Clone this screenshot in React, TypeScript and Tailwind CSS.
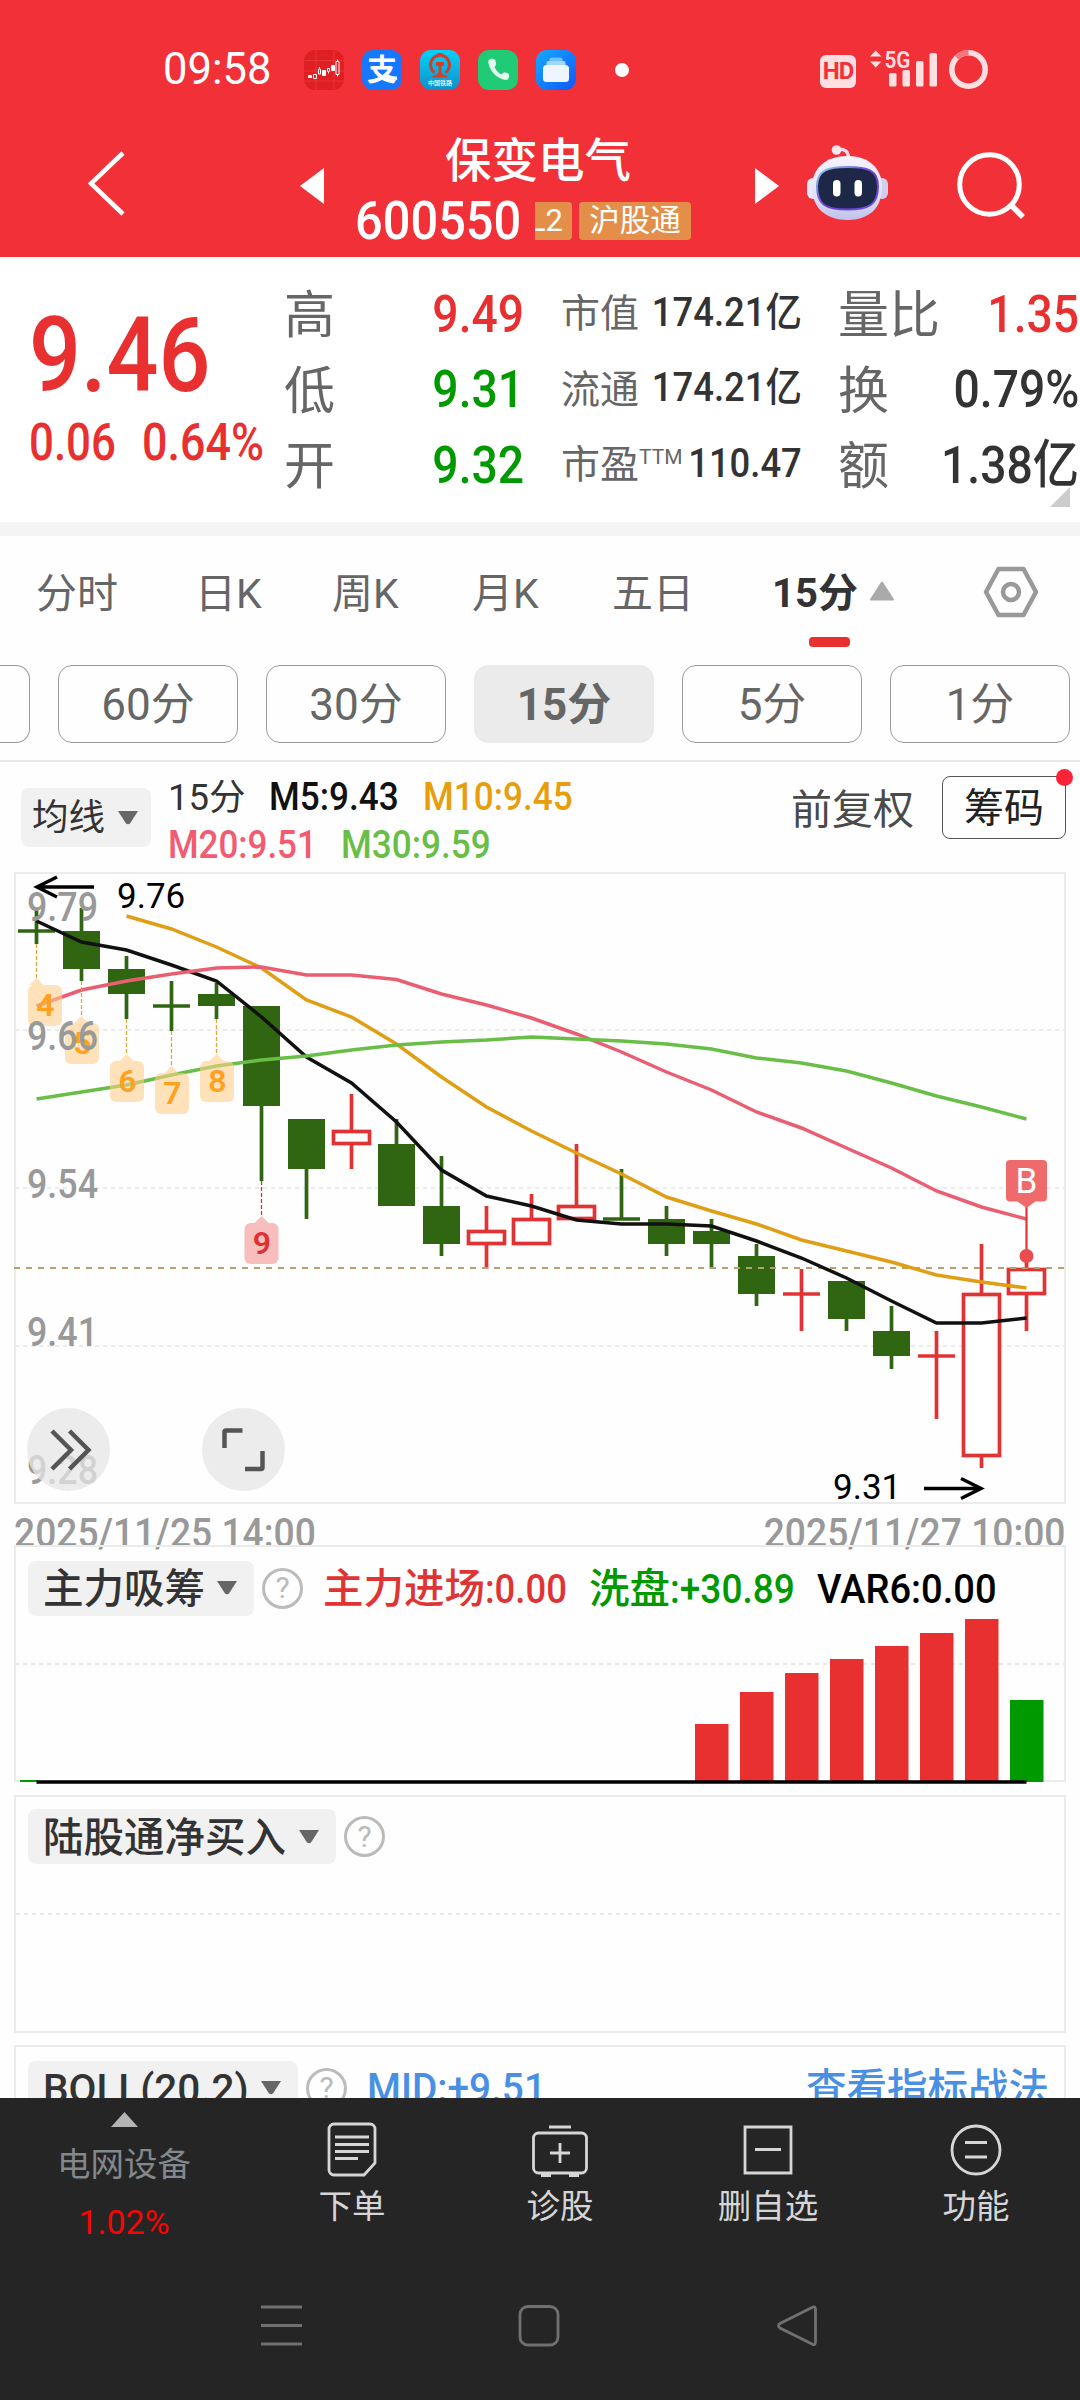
import type { ReactNode } from 'react';
import clsx from 'clsx';

const FONT = "font-['Roboto','Noto_Sans_CJK_SC',sans-serif]";

const STEP = 45;
const xAt = (i: number) => 36.5 + STEP * i;

// [up, high, bodyTop, bodyBottom, low] in chart units
type Candle = [boolean, number, number, number, number];

const candles: Candle[] = [
    [false, 910, 931, 931, 944],
    [false, 908, 931, 969, 981],
    [false, 956, 969, 994, 1019],
    [false, 981, 1006, 1006, 1031],
    [false, 983, 994, 1006, 1019],
    [false, 1006, 1006, 1106, 1181],
    [false, 1119, 1119, 1169, 1219],
    [true, 1094, 1130, 1145, 1169],
    [false, 1119, 1144, 1206, 1206],
    [false, 1156, 1206, 1244, 1256],
    [true, 1206, 1230, 1245, 1269],
    [true, 1194, 1218, 1245, 1245],
    [true, 1144, 1205, 1220, 1220],
    [false, 1169, 1219, 1219, 1219],
    [false, 1206, 1219, 1244, 1256],
    [false, 1219, 1231, 1244, 1269],
    [false, 1244, 1256, 1294, 1306],
    [true, 1269, 1294, 1294, 1331],
    [false, 1281, 1281, 1319, 1331],
    [false, 1306, 1331, 1356, 1369],
    [true, 1331, 1356, 1356, 1419],
    [true, 1244, 1293, 1457, 1468],
    [true, 1256, 1268, 1295, 1331],
];

const averages = [
    { color: '#111111', from: 0, ys: [921, 942, 950, 965, 981, 1017, 1057, 1083, 1122, 1170, 1196, 1206, 1220, 1224, 1224, 1226, 1241, 1258, 1278, 1301, 1323, 1323, 1318] },
    { color: '#e09e14', from: 2, ys: [916, 929, 947, 968, 1000, 1017, 1044, 1077, 1107, 1131, 1153, 1174, 1197, 1211, 1224, 1240, 1251, 1262, 1275, 1282, 1288] },
    { color: '#ea5e72', from: 0, ys: [1006, 990, 981, 974, 968, 967, 975, 975, 979.5, 994, 1005, 1018, 1034, 1052, 1072, 1090, 1112, 1128, 1148, 1168, 1191, 1207, 1219] },
    { color: '#68be46', from: 0, ys: [1099, 1092, 1085, 1075, 1066, 1060, 1056, 1050, 1045, 1042, 1040, 1037, 1039, 1041, 1044, 1049, 1058, 1063, 1071, 1083, 1096, 1107, 1119] },
];

const counts = [
    { n: 4, i: 0, left: 28, low: 944, top: 985 },
    { n: 5, i: 1, left: 65, low: 981, top: 1023 },
    { n: 6, i: 2, left: 110, low: 1019, top: 1061 },
    { n: 7, i: 3, left: 155, low: 1031, top: 1073 },
    { n: 8, i: 4, left: 200, low: 1019, top: 1061 },
    { n: 9, i: 5, left: 244.5, low: 1181, top: 1223 },
];

const priceTicks: [string, number][] = [
    ['9.79', 921],
    ['9.66', 1050],
    ['9.54', 1198],
    ['9.41', 1346],
    ['9.28', 1484],
];

const bars: [number, string][] = [
    [1724, '#e83030'],
    [1692, '#e83030'],
    [1673, '#e83030'],
    [1659, '#e83030'],
    [1646, '#e83030'],
    [1633, '#e83030'],
    [1619, '#e83030'],
    [1700, '#009900'],
];

function StatusBar() {
    return (
        <div className="flex h-[120px] items-center pt-[20px] pl-[163px]">
            <span className="w-[141px] text-[43.500px] leading-[48px] text-white">09:58</span>
            <div className="flex gap-[18px]">
                <svg width="40" height="40" viewBox="0 0 40 40">
                    <rect width="40" height="40" rx="11" fill="#e01f22" />
                    <path d="M0 10.500H40M0 21H40M0 31H40M12 0V40M30 0V40" stroke="#e83a3a" strokeWidth=".8" />
                    <g fill="#fff" stroke="#fff" strokeWidth="1">
                        <path d="M4.500 25.500h3v2h-3zM18.500 20.500h3v5h-3zM27.500 15.500h3v5h-3z" />
                        <path fill="none" d="M9.500 24.500h3v4h-3zM14.500 19h2v5h-2zM23.500 18.500h2v3h-2zM32 11.500h3v13h-3zM15.500 17v2M24.500 21.500v2M33.500 9.500v2M33.500 24.500v2" />
                    </g>
                </svg>
                <div className="relative size-[40px] overflow-hidden rounded-[11px] bg-[#1677ff] text-center text-[30px] leading-[39px] font-bold text-white">
                    支
                    <svg className="absolute inset-0" width="40" height="40" viewBox="0 0 40 40">
                        <path d="M23 25c5 2.500 9 3.500 12 3" fill="none" stroke="#fff" strokeWidth="3.500" />
                    </svg>
                </div>
                <div className="relative size-[40px] rounded-[11px] bg-linear-to-b from-[#00d2fb] to-[#128fc9]">
                    <svg width="40" height="28" viewBox="0 0 40 28">
                        <path d="M14.500 22.500a9.500 9.500 0 1 1 11 0" fill="none" stroke="#c9402b" strokeWidth="3" />
                        <path d="M17.500 3h5v3h-5zM16 12h8v4h-2.500v6c0 2 2 3 6 4v1.500h-15V26c4-1 6-2 6-4v-6H16z" fill="#d93c22" />
                    </svg>
                    <span className="absolute top-[29px] left-[8px] w-[30px] text-[6px] leading-[8px] font-medium text-white">中国铁路</span>
                </div>
                <svg width="40" height="40" viewBox="0 0 40 40">
                    <rect width="40" height="40" rx="11" fill="#1fcb74" />
                    <path d="M12.500 9c-2 .5-2.500 2.300-2 4.500 1.800 8 8 14.500 16 16.300 2.500.5 4.500-.5 4.500-3v-2.500c-3-2.300-5.500-2.300-7.500.2-3-1.500-5.500-4-7-7.500 2-1.800 2-3.500.5-7.500-1-.8-3-.8-4.500-.5z" fill="#e4fbef" />
                </svg>
                <svg width="40" height="40" viewBox="0 0 40 40">
                    <defs>
                        <linearGradient id="cards" x1="0" y1="0" x2="1" y2="1">
                            <stop offset="0" stopColor="#15a9ff" />
                            <stop offset="1" stopColor="#0f57fb" />
                        </linearGradient>
                    </defs>
                    <rect width="40" height="40" rx="11" fill="url(#cards)" />
                    <rect x="13.500" y="7.500" width="13" height="5" rx="2" fill="#6fc0ff" />
                    <rect x="10.500" y="11" width="19" height="6" rx="2" fill="#a5d6ff" />
                    <rect x="7" y="15" width="26" height="17" rx="3.500" fill="#eef5ff" />
                </svg>
            </div>
            <div className="ml-[39px] size-[14px] rounded-full bg-white" />
            <div className="mt-[2px] ml-[191px] flex h-[33px] w-[36px] items-center justify-center rounded-[6px] bg-[#ffdfe1] text-[24px] font-bold tracking-[-1px] text-[#f23038]">
                HD
            </div>
            <svg className="ml-[14px]" width="120" height="44" viewBox="870 47 120 44" fill="#ffdfe1">
                <path d="M870 55.500l5.700-6 5.700 6zM870 60.500l5.700 6 5.700-6z" />
                <text x="884.500" y="66.500" fontSize="23" fontWeight="600" textLength="26" lengthAdjust="spacingAndGlyphs">5G</text>
                <rect x="889" y="72" width="7.500" height="13.500" rx="1.500" />
                <rect x="902.500" y="69" width="7.500" height="16.500" rx="1.500" />
                <rect x="916" y="60" width="7.500" height="25.500" rx="1.500" />
                <rect x="929.500" y="52" width="7.500" height="33.500" rx="1.500" />
                <circle cx="968.500" cy="68.500" r="16.700" fill="none" stroke="#ffdfe1" strokeWidth="5.600" />
                <path d="M956.700 56.700A16.700 16.700 0 0 1 968.500 51.800" fill="none" stroke="#f6787d" strokeWidth="5.600" />
            </svg>
        </div>
    );
}

function Robot() {
    return (
        <svg width="82" height="76" viewBox="807 145 82 76">
            <defs>
                <linearGradient id="shell" x1="0" y1="0" x2="0" y2="1">
                    <stop offset="0" stopColor="#f5f3ff" />
                    <stop offset=".6" stopColor="#e3e2f8" />
                    <stop offset="1" stopColor="#bfc3ea" />
                </linearGradient>
                <linearGradient id="rim" x1="0" y1="0" x2="1" y2="1">
                    <stop offset="0" stopColor="#8fd8ee" />
                    <stop offset=".5" stopColor="#6a3fd0" />
                    <stop offset="1" stopColor="#6a50e0" />
                </linearGradient>
            </defs>
            <path d="M837 149.500c8-1 11.500 2 11.500 9" fill="none" stroke="#f0dcec" strokeWidth="3.500" />
            <circle cx="836.500" cy="150" r="4.800" fill="#fbe6ee" />
            <rect x="807" y="178" width="12" height="21" rx="6" fill="#e9e9fb" />
            <rect x="876" y="178" width="12" height="21" rx="6" fill="#cfd0f0" />
            <path d="M847.500 156c21 0 34.500 12 34.500 31 0 21-13 33-34.500 33S812 208 812 187c0-19 14-31 35.500-31z" fill="url(#shell)" />
            <path d="M847.500 167c20 0 30.500 3 30.500 19.500 0 18-8.500 23-30.500 23s-30.500-5-30.500-23c0-16.500 10.500-19.500 30.500-19.500z" fill="#1f2748" stroke="url(#rim)" strokeWidth="2" />
            <rect x="833" y="180" width="7.500" height="16.500" rx="3.700" fill="#fff" />
            <rect x="854.500" y="180" width="7.500" height="16.500" rx="3.700" fill="#fff" />
        </svg>
    );
}

function TitleBar() {
    return (
        <div className="flex h-[137px] text-white">
            <svg className="mt-[30px] ml-[84px]" width="44" height="68" viewBox="84 150 44 68">
                <path d="M123 153L91 183.500L123 214" fill="none" stroke="#fff" strokeWidth="4.500" />
            </svg>
            <svg className="mt-[48px] ml-[172px]" width="24" height="36" viewBox="0 0 24 36">
                <path d="M24 0V36L0 18z" fill="#fff" />
            </svg>
            <div className="ml-[31px] w-[336px] pt-[14px]">
                <div className="pl-[90px] text-[46.500px] leading-[54px] font-medium">保变电气</div>
                <div className="mt-[10px] flex h-[46px] items-center">
                    <span className="w-[180px] text-[53px] leading-[46px] font-medium">
                        <span className="inline-block origin-left scale-x-[.92]">600550</span>
                    </span>
                    <span className="flex h-[38px] w-[37px] justify-end overflow-hidden rounded-r-[4px] bg-[#e38f4a] pr-[9px] text-[31px] leading-[38px]">L2</span>
                    <span className="ml-[7px] h-[38px] w-[112px] rounded-[4px] bg-[#e38f4a] text-center text-[30.500px] leading-[37px]">沪股通</span>
                </div>
            </div>
            <svg className="mt-[48px] ml-[64px]" width="24" height="36" viewBox="0 0 24 36">
                <path d="M0 0L24 18L0 36z" fill="#fff" />
            </svg>
            <div className="mt-[25px] ml-[28px]">
                <Robot />
            </div>
            <svg className="mt-[30px] ml-[66px]" width="74" height="74" viewBox="955 150 74 74" fill="none" stroke="#fff" strokeWidth="5">
                <circle cx="989.500" cy="184.500" r="29.800" />
                <path d="M1010.500 204.500L1023 217" strokeWidth="5.500" />
            </svg>
        </div>
    );
}

interface StatProps {
    label: ReactNode;
    value: string;
    big?: boolean;
    color?: string;
}

function Stat({ label, value, big, color = 'text-[#333333]' }: StatProps) {
    return (
        <div className="flex h-[75.500px] items-center justify-between whitespace-nowrap">
            <span className={clsx('pt-[3px] text-[#666666]', big ? 'text-[51px]' : 'text-[39px]')}>{label}</span>
            <span className={clsx('-ml-[20px] origin-right font-medium', big ? 'scale-x-[.89] text-[52px]' : 'scale-x-[.91] text-[40px]', color)}>{value}</span>
        </div>
    );
}

function Quote() {
    const red = 'text-[#e83030]';
    const green = 'text-[#009900]';
    return (
        <div className="flex h-[265px] bg-white">
            <div className="w-[255px] pt-[39px] pl-[29px] text-[#e83030]">
                <div className="h-[120px] origin-left scale-x-[.88] text-[104px] leading-[120px] font-medium">9.46</div>
                <div className="flex h-[54px] text-[51px] leading-[54px]">
                    <span className="w-[113px] shrink-0"><span className="inline-block origin-left scale-x-[.86] font-medium">0.06</span></span>
                    <span className="w-[120px] shrink-0"><span className="inline-block origin-left scale-x-[.88] font-medium">0.64%</span></span>
                </div>
            </div>
            <div className="ml-[29px] w-[240px] pt-[20px]">
                <Stat big label="高" value="9.49" color={red} />
                <Stat big label="低" value="9.31" color={green} />
                <Stat big label="开" value="9.32" color={green} />
            </div>
            <div className="ml-[37px] w-[241px] pt-[18px]">
                <Stat label="市值" value="174.21亿" />
                <Stat label="流通" value="174.21亿" />
                <Stat label={<>市盈<sup className="-top-[14px] text-[21px] leading-none">TTM</sup></>} value="110.47" />
            </div>
            <div className="relative ml-[36px] w-[241px] pt-[20px]">
                <Stat big label="量比" value="1.35" color={red} />
                <Stat big label="换" value="0.79%" />
                <Stat big label="额" value="1.38亿" />
                <svg className="absolute top-[230px] right-[9px]" width="20" height="20" viewBox="0 0 20 20">
                    <path d="M20 0V20H0z" fill="#cccccc" />
                </svg>
            </div>
        </div>
    );
}

function PeriodTabs() {
    return (
        <div className="h-[129px] pt-[26px]">
            <div className="flex h-[60px] items-center text-[41px] leading-[60px] text-[#666666]">
                <span className="ml-[36px] w-[159px] pt-[3px]">分时</span>
                <span className="w-[137px] pt-[3px]">日K</span>
                <span className="w-[140px] pt-[3px]">周K</span>
                <span className="w-[140px] pt-[3px]">月K</span>
                <span className="w-[160px] pt-[3px]">五日</span>
                <span className="w-[97px] pt-[3px] text-[40px] font-bold text-[#333333]">15分</span>
                <svg className="-mt-[2px]" width="26" height="20" viewBox="0 0 26 20">
                    <path d="M13 1.500L24 18.500H2z" fill="#aaaaaa" stroke="#aaaaaa" strokeWidth="2" strokeLinejoin="round" />
                </svg>
                <svg className="ml-[88px]" width="56" height="52" viewBox="0 0 56 52" fill="none" stroke="#999999" strokeWidth="4.500">
                    <path d="M15.500 3h25L53 26L40.500 49h-25L3 26z" strokeLinejoin="round" />
                    <circle cx="28" cy="26" r="8" />
                </svg>
            </div>
            <div className="mt-[15px] ml-[809px] h-[10px] w-[41px] rounded-[4px] bg-[#e83030]" />
        </div>
    );
}

function PeriodPills() {
    return (
        <div className="flex h-[97px] gap-[28px] overflow-hidden border-b-2 border-[#e8e8e8] text-[44px] leading-[79px] text-[#666666]">
            <div className="h-[78px] w-[30px] shrink-0 rounded-r-[14px] border border-l-0 border-[#999999]" />
            {['60分', '30分', '15分', '5分', '1分'].map((p) => (
                <div
                    key={p}
                    className={clsx(
                        'h-[78px] w-[180px] shrink-0 rounded-[14px] border text-center',
                        p === '15分' ? 'border-[#ebebeb] bg-[#ebebeb] font-bold' : 'border-[#999999]'
                    )}
                >
                    {p}
                </div>
            ))}
        </div>
    );
}

function Down({ className }: { className?: string }) {
    return (
        <svg className={className} width="20" height="14" viewBox="0 0 20 14">
            <path d="M0 0H20L12 12.500Q10 14 8 12.500z" fill="#666666" />
        </svg>
    );
}

function Legend() {
    return (
        <div className="flex h-[110px]">
            <div className="mt-[26px] ml-[21px] flex h-[59px] w-[130px] items-center rounded-[8px] bg-[#f1f1f1] pl-[11px] text-[36.500px] text-[#333333]">
                <span className="pt-[2px]">均线</span>
                <Down className="ml-[13px]" />
            </div>
            <div className="mt-[11px] ml-[17px] w-[420px] text-[38px] leading-[48px] font-medium whitespace-nowrap">
                <div className="flex">
                    <span className="w-[101px] pt-px text-[36.500px] font-normal text-[#333333]">15分</span>
                    <span className="w-[154px] text-[#111111]"><span className="inline-block origin-left scale-x-[.925]">M5:9.43</span></span>
                    <span className="text-[#e89e0c]"><span className="inline-block origin-left scale-x-[.925]">M10:9.45</span></span>
                </div>
                <div className="-mt-px flex">
                    <span className="w-[173px] text-[#f45a70]"><span className="inline-block origin-left scale-x-[.92]">M20:9.51</span></span>
                    <span className="text-[#68be46]"><span className="inline-block origin-left scale-x-[.925]">M30:9.59</span></span>
                </div>
            </div>
            <span className="mt-[18px] ml-[203px] w-[151px] text-[41px] leading-[60px] text-[#4a4a4a]">前复权</span>
            <div className="relative mt-[14px] h-[63px] w-[124px] rounded-[8px] border border-[#555555] text-center text-[40px] leading-[64px] text-[#222222]">
                筹码
                <span className="absolute -top-[8px] -right-[8px] size-[17px] rounded-full bg-[#fb2338]" />
            </div>
        </div>
    );
}

function Candles() {
    return (
        <svg className="block" width="1080" height="633" viewBox="0 872 1080 633">
            <g fill="none" stroke="#ebebeb" strokeWidth="2">
                <rect x="15" y="873" width="1050" height="630" />
                <path d="M15 1030H1065M15 1188H1065M15 1346H1065" strokeDasharray="4 4" />
            </g>
            {candles.map(([up, high, top, bottom, low], i) => {
                const x = xAt(i);
                const color = up ? '#e03434' : '#306612';
                return (
                    <g key={i} stroke={color} strokeWidth="3.700">
                        {high < top && <path d={`M${x} ${high}V${top}`} />}
                        {low > bottom && <path d={`M${x} ${bottom}V${low}`} />}
                        {top === bottom && <path d={`M${x - 18.5} ${top}H${x + 18.5}`} />}
                        {top !== bottom && up && <rect x={x - 18} y={top + 1.5} width="36" height={bottom - top - 3} fill="#fff" />}
                        {top !== bottom && !up && <rect x={x - 18.5} y={top} width="37" height={bottom - top} fill={color} stroke="none" />}
                    </g>
                );
            })}
            <path d="M14 1268H1066" stroke="#b8a070" strokeWidth="1.800" strokeDasharray="6 6" />
            {averages.map((a) => (
                <polyline
                    key={a.color}
                    points={a.ys.map((y, i) => `${xAt(i + a.from)},${y}`).join(' ')}
                    fill="none"
                    stroke={a.color}
                    strokeWidth="3.500"
                />
            ))}
            {counts.map((c) => {
                const x = xAt(c.i);
                const hot = c.n === 9;
                return (
                    <g key={c.n}>
                        <path d={`M${x} ${c.low}V${c.top - 7}`} stroke={hot ? '#b04545' : '#dba93c'} strokeWidth="1.300" strokeDasharray="4 2" />
                        <g fill={hot ? '#f5a8a8' : '#ffce8a'} fillOpacity={hot ? 0.75 : 0.6}>
                            <path d={`M${x - 7} ${c.top}L${x} ${c.top - 7}L${x + 7} ${c.top}z`} />
                            <rect x={c.left} y={c.top} width="34" height="41" rx="6" />
                        </g>
                        <text x={c.left + 17.5} y={c.top + 30.5} textAnchor="middle" fontSize="32" fontWeight="600" fill={hot ? '#dc3232' : '#ffa01e'}>
                            {c.n}
                        </text>
                    </g>
                );
            })}
            {priceTicks.map(([label, y]) => (
                <text key={label} x="27" y={y} fontSize="40" fontWeight="500" fill="#999999" textLength="71" lengthAdjust="spacingAndGlyphs">
                    {label}
                </text>
            ))}
            <g fill="none" stroke="#000" strokeWidth="3.500">
                <path d="M94 887H37M57 877L37 887L57 897" />
                <path d="M924 1488.500H981M961 1478.500L981 1488.500L961 1498.500" />
            </g>
            <text x="117" y="908" fontSize="35">9.76</text>
            <text x="833" y="1499" fontSize="35">9.31</text>
            <path d="M1026.500 1207V1268" stroke="#e03434" strokeWidth="2.200" />
            <circle cx="1026.500" cy="1256" r="7" fill="#e84c4c" />
            <path d="M1017 1201L1026.500 1208L1036 1201z" fill="#ef6b6b" />
            <rect x="1006" y="1160" width="41" height="41.500" rx="4" fill="#ef6b6b" />
            <text x="1026.500" y="1193" textAnchor="middle" fontSize="35" fill="#fff">B</text>
            <g fill="#e6e6e6" fillOpacity=".75">
                <circle cx="68.500" cy="1449.500" r="41.500" />
                <circle cx="243.500" cy="1449.500" r="41.500" />
            </g>
            <g fill="none" stroke="#555555" strokeWidth="4.500">
                <path d="M52 1431L71 1450L52 1469M69.500 1431L88.500 1450L69.500 1469" />
                <path d="M242.500 1430.500H226a1.500 1.500 0 0 0 -1.500 1.500V1448M245 1469H261a1.500 1.500 0 0 0 1.500 -1.500V1451" />
            </g>
        </svg>
    );
}

function IndicatorChip({ name, width }: { name: string; width: string }) {
    return (
        <>
            <div className={clsx('flex h-[55px] shrink-0 items-center justify-between rounded-[8px] bg-[#f1f1f1] pr-[17px] pl-[15px] text-[40.500px] font-medium text-[#333333]', width)}>
                <span className="pt-[2px] leading-[56px]">{name}</span>
                <Down />
            </div>
            <div className="ml-[8px] flex size-[41px] shrink-0 items-center justify-center rounded-full border-[3px] border-[#bbbbbb] text-[30px] leading-none text-[#bbbbbb]">?</div>
        </>
    );
}

function Indicators() {
    return (
        <div className="flex h-[553px] flex-col overflow-hidden pl-[14px]">
            <div className="relative h-[237px] w-[1052px] shrink-0 border-2 border-[#ebebeb]">
                <svg className="absolute -top-[2px] -left-[16px]" width="1080" height="242" viewBox="0 1545 1080 242">
                    <path d="M15 1664H1065" stroke="#e8e8e8" strokeWidth="2" strokeDasharray="4 4" />
                    {bars.map(([top, color], i) => (
                        <rect key={top} x={xAt(i + 15) - 16.5} y={top} width="33.500" height={1782 - top} fill={color} />
                    ))}
                    <path d="M20 1781H37" stroke="#009900" strokeWidth="2" />
                    <path d="M36.500 1782H1026.500" stroke="#000" strokeWidth="3.500" />
                </svg>
                <div className="relative flex items-center pt-[12px] pl-[12px] whitespace-nowrap">
                    <IndicatorChip name="主力吸筹" width="w-[226px]" />
                    <div className="flex pt-[2px] pl-[20px] text-[40.500px] leading-[56px] font-medium">
                        <span className="w-[266px] text-[#e03434]">主力进场<span className="inline-block origin-left scale-x-[.9]">:0.00</span></span>
                        <span className="w-[228px] text-[#009900]">洗盘<span className="inline-block origin-left scale-x-[.915]">:+30.89</span></span>
                        <span className="origin-left scale-x-[.94] text-black">VAR6:0.00</span>
                    </div>
                </div>
            </div>
            <div className="relative mt-[13px] h-[238px] w-[1052px] shrink-0 border-2 border-[#ebebeb]">
                <svg className="absolute top-[116px] left-0" width="1048" height="2">
                    <path d="M0 1H1048" stroke="#e8e8e8" strokeWidth="2" strokeDasharray="4 4" />
                </svg>
                <div className="flex items-center pt-[12px] pl-[12px]">
                    <IndicatorChip name="陆股通净买入" width="w-[308px]" />
                </div>
            </div>
            <div className="mt-[12px] h-[238px] w-[1052px] shrink-0 border-2 border-[#ebebeb]">
                <div className="flex items-center pt-[12px] pl-[12px] text-[40px] leading-[56px] text-[#4a90e2]">
                    <IndicatorChip name="BOLL(20.2)" width="w-[270px]" />
                    <span className="w-[459px] shrink-0 pt-[2px] pl-[20px] font-medium"><span className="inline-block origin-left scale-x-[.97]">MID:+9.51</span></span>
                    <span className="pt-[2px] text-[40.500px] font-medium whitespace-nowrap">查看指标战法</span>
                </div>
            </div>
        </div>
    );
}

const actions: { label: string; icon: ReactNode }[] = [
    {
        label: '下单',
        icon: (
            <path d="M10 4h36a5 5 0 0 1 5 5v34L40 55H10a5 5 0 0 1-5-5V9a5 5 0 0 1 5-5zM11 17h34M11 24.500h34M11 31.500h34M11 38.500h23" />
        ),
    },
    {
        label: '诊股',
        icon: (
            <>
                <rect x="1.500" y="13" width="53" height="40" rx="5" />
                <path d="M17 7h22M28 23v20M18 33h20M9 55.500h10M37 55.500h10" />
            </>
        ),
    },
    { label: '删自选', icon: <path d="M5 7h46v46H5zM15 29.500h26" /> },
    {
        label: '功能',
        icon: (
            <>
                <circle cx="28" cy="30" r="24" />
                <path d="M17 22.500h22M17 37h22" />
            </>
        ),
    },
];

function BottomBar() {
    return (
        <div className="flex h-[302px] flex-col bg-[#252525]">
            <div className="flex h-[160px]">
                <div className="flex w-[248px] flex-col items-center pt-[14px]">
                    <svg width="27" height="15" viewBox="0 0 27 15">
                        <path d="M13.500 0L27 15H0z" fill="#b4b4b4" />
                    </svg>
                    <span className="mt-[13px] text-[33.500px] leading-[50px] text-[#82888c]">电网设备</span>
                    <span className="mt-[7px] text-[34px] leading-[50px] text-[#f50505]">1.02%</span>
                </div>
                {actions.map((a) => (
                    <div key={a.label} className="flex w-[208px] flex-col items-center pt-[22px]">
                        <svg width="56" height="60" viewBox="0 0 56 60" fill="none" stroke="#d6d6d6" strokeWidth="2.800">
                            {a.icon}
                        </svg>
                        <span className="mt-[3px] text-[33.500px] leading-[48px] text-[#d6d6d6]">{a.label}</span>
                    </div>
                ))}
            </div>
            <div className="flex h-[142px] pt-[45px] pl-[259px]">
                <svg width="44" height="46" viewBox="0 0 44 46" stroke="#707070" strokeWidth="3">
                    <path d="M2 4H43M2 22.500H43M2 41H43" />
                </svg>
                <svg className="ml-[214px]" width="44" height="46" viewBox="0 0 44 46" fill="none" stroke="#707070" strokeWidth="2.800">
                    <rect x="3" y="3.500" width="38" height="38.500" rx="8" />
                </svg>
                <svg className="ml-[214px]" width="44" height="46" viewBox="0 0 44 46" fill="none" stroke="#707070" strokeWidth="2.800">
                    <path d="M37 4.500Q40.500 2.500 40.500 6.500V39Q40.500 43 37 41L5 25Q2 22.500 5 20.500z" />
                </svg>
            </div>
        </div>
    );
}

export default function App() {
    return (
        <div className={clsx('flex h-[2400px] w-[1080px] flex-col overflow-hidden bg-[#fefefe]', FONT)}>
            <div className="h-[257px] bg-[#f23038]">
                <StatusBar />
                <TitleBar />
            </div>
            <Quote />
            <div className="h-[14px] bg-[#f4f4f4]" />
            <PeriodTabs />
            <PeriodPills />
            <Legend />
            <Candles />
            <div className="flex h-[40px] justify-between px-[14px] text-[40px] leading-[57px] font-medium text-[#999999]">
                <span className="origin-left scale-x-[.93]">2025/11/25 14:00</span>
                <span className="origin-right scale-x-[.93]">2025/11/27 10:00</span>
            </div>
            <Indicators />
            <BottomBar />
        </div>
    );
}
